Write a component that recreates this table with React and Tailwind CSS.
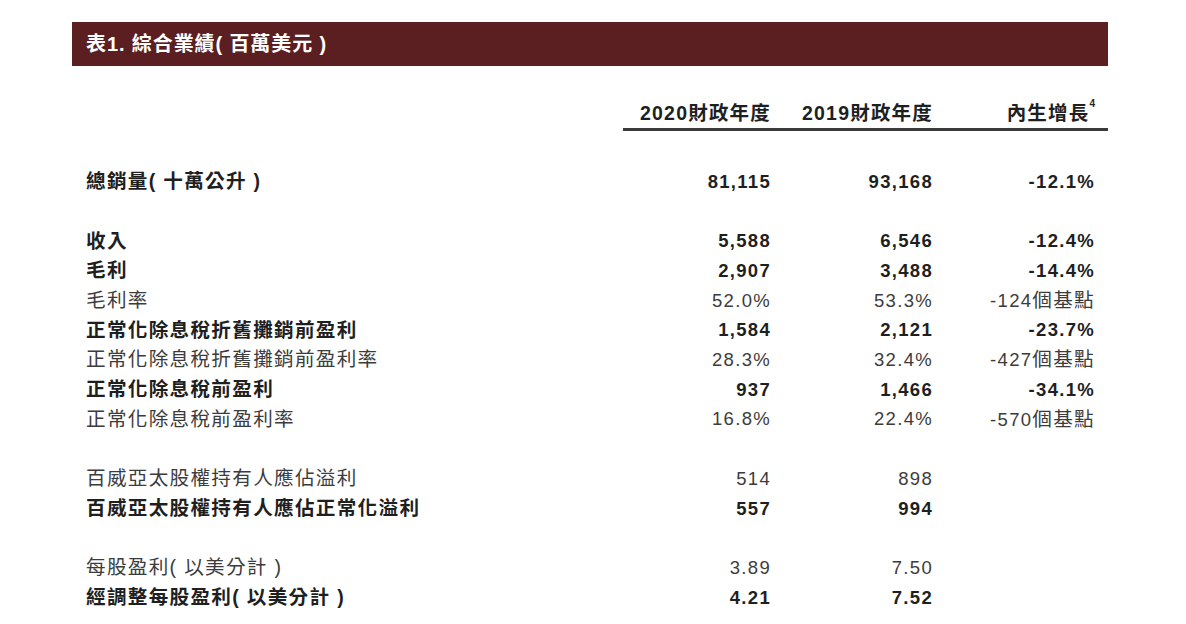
const rows = [
  { label: '總銷量( 十萬公升 )', a: '81,115', b: '93,168', c: '-12.1%', bold: true },
  null,
  { label: '收入', a: '5,588', b: '6,546', c: '-12.4%', bold: true },
  { label: '毛利', a: '2,907', b: '3,488', c: '-14.4%', bold: true },
  { label: '毛利率', a: '52.0%', b: '53.3%', c: '-124', bp: true },
  { label: '正常化除息稅折舊攤銷前盈利', a: '1,584', b: '2,121', c: '-23.7%', bold: true },
  { label: '正常化除息稅折舊攤銷前盈利率', a: '28.3%', b: '32.4%', c: '-427', bp: true },
  { label: '正常化除息稅前盈利', a: '937', b: '1,466', c: '-34.1%', bold: true },
  { label: '正常化除息稅前盈利率', a: '16.8%', b: '22.4%', c: '-570', bp: true },
  null,
  { label: '百威亞太股權持有人應佔溢利', a: '514', b: '898', c: '' },
  { label: '百威亞太股權持有人應佔正常化溢利', a: '557', b: '994', c: '', bold: true },
  null,
  { label: '每股盈利( 以美分計 )', a: '3.89', b: '7.50', c: '' },
  { label: '經調整每股盈利( 以美分計 )', a: '4.21', b: '7.52', c: '', bold: true },
]

const font = { fontFamily: "'Liberation Sans', 'Noto Sans CJK TC', sans-serif" }

const App = () => {
  return (
    <div className="w-[1186px] h-[624px] bg-white pl-[72px] pr-[78px] pt-[22px] overflow-hidden" style={font}>
      {/* title bar */}
      <div className="h-[44px] bg-[#5b1f22] flex items-center pl-[14px]">
        <h1 className="text-white text-[20px] font-bold tracking-[0.9px]">表1. 綜合業績( 百萬美元 )</h1>
      </div>

      {/* column headers */}
      <div className="ml-[551px] mt-[34px] border-b-[3px] border-[#3a3a3a] pr-[13px] flex text-[19.5px] font-bold text-[#1f1f1f] leading-[27px] pb-[1px] tracking-[1.2px]">
        <div className="w-[148px] text-right">2020財政年度</div>
        <div className="w-[162px] text-right">2019財政年度</div>
        <div className="w-[162px] text-right">
          內生增長<sup className="text-[10px] align-[8px] tracking-normal">4</sup>
        </div>
      </div>

      {/* rows */}
      <div className="pl-[14px] pr-[13px] mt-[36px]">
        {rows.map((r, i) =>
          r ? (
            <div
              key={i}
              className={`grid grid-cols-[1fr_162px_162px_162px] h-[29.7px] items-center text-[18.5px] tracking-[1.3px] ${
                r.bold ? 'font-bold text-[#1f1f1f]' : 'font-normal text-[#3c3c3c]'
              }`}
            >
              <div className="whitespace-nowrap text-[19.6px]">{r.label}</div>
              <div className="text-right">{r.a}</div>
              <div className="text-right">{r.b}</div>
              <div className="text-right whitespace-nowrap">
                {r.c}
                {r.bp && <span className="text-[19.6px]">個基點</span>}
              </div>
            </div>
          ) : (
            <div key={i} className="h-[29.7px]" />
          )
        )}
      </div>
    </div>
  )
}

export default App
